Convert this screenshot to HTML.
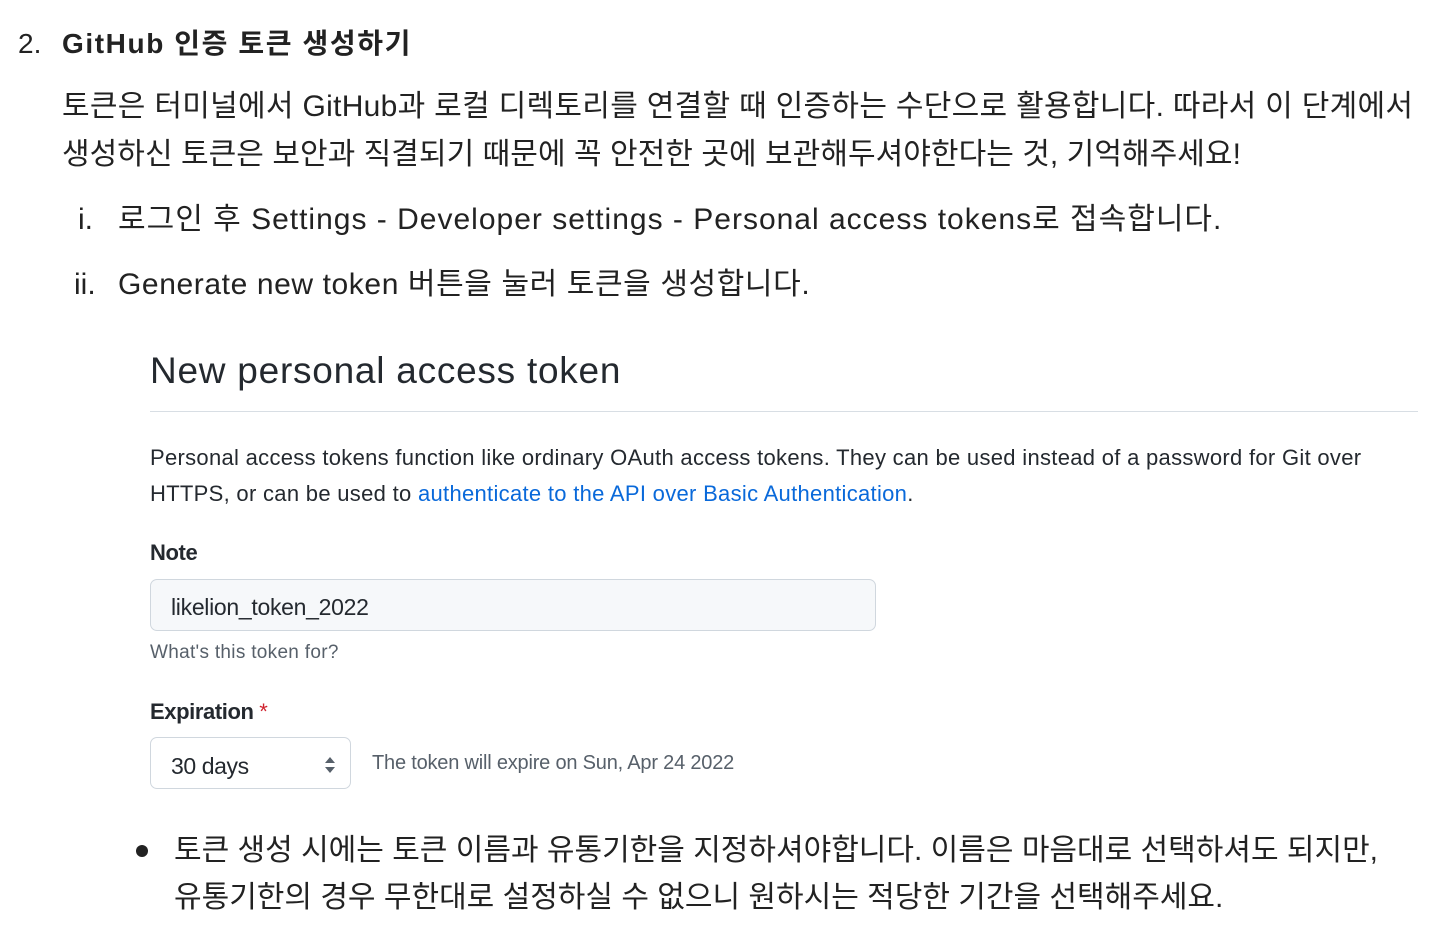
<!DOCTYPE html>
<html><head><meta charset="utf-8"><style>
body{margin:0;width:1436px;height:932px;background:#fff;position:relative;overflow:hidden;font-family:"Liberation Sans","Noto Sans CJK KR",sans-serif;color:#1f1f1f}
.a{position:absolute;white-space:nowrap;line-height:40px}
.k{font-size:30px;color:#222}
.g{font-family:"Liberation Sans","Noto Sans CJK KR",sans-serif;color:#24292f}
</style></head><body>
<div class="a k" style="left:18px;top:24px;font-size:28px">2.</div>
<div class="a k" style="left:62px;top:24px;font-size:28px;font-weight:bold;letter-spacing:1.6px">GitHub 인증 토큰 생성하기</div>
<div class="a k" style="left:62px;top:87px;letter-spacing:0.3px">토큰은 터미널에서 GitHub과 로컬 디렉토리를 연결할 때 인증하는 수단으로 활용합니다. 따라서 이 단계에서</div>
<div class="a k" style="left:62px;top:135px;letter-spacing:0.05px">생성하신 토큰은 보안과 직결되기 때문에 꼭 안전한 곳에 보관해두셔야한다는 것, 기억해주세요!</div>
<div class="a k" style="left:78px;top:200px">i.</div>
<div class="a k" style="left:118px;top:200px;letter-spacing:1.0px">로그인 후 Settings - Developer settings - Personal access tokens로 접속합니다.</div>
<div class="a k" style="left:74px;top:265px">ii.</div>
<div class="a k" style="left:118px;top:265px;letter-spacing:0.6px">Generate new token 버튼을 눌러 토큰을 생성합니다.</div>
<div class="a g" style="left:150px;top:348px;font-size:37px;line-height:46px;letter-spacing:0.75px">New personal access token</div>
<div style="position:absolute;left:150px;top:411px;width:1268px;height:1px;background:#d8dee4"></div>
<div class="a g" style="left:150px;top:444px;font-size:22px;line-height:28px;letter-spacing:0.3px">Personal access tokens function like ordinary OAuth access tokens. They can be used instead of a password for Git over</div>
<div class="a g" style="left:150px;top:480px;font-size:22px;line-height:28px;letter-spacing:0.3px">HTTPS, or can be used to <span style="color:#0969da">authenticate to the API over Basic Authentication</span>.</div>
<div class="a g" style="left:150px;top:539px;font-size:22px;line-height:28px;font-weight:bold;letter-spacing:-0.4px">Note</div>
<div style="position:absolute;left:150px;top:579px;width:724px;height:50px;border:1px solid #d0d7de;border-radius:7px;background:#f6f8fa"></div>
<div class="a g" style="left:171px;top:593px;font-size:23px;line-height:28px;letter-spacing:-0.3px">likelion_token_2022</div>
<div class="a g" style="left:150px;top:641px;font-size:19px;line-height:24px;color:#57606a;letter-spacing:0.3px">What's this token for?</div>
<div class="a g" style="left:150px;top:698px;font-size:22px;line-height:28px;font-weight:bold;letter-spacing:-0.4px">Expiration <span style="color:#cf222e;font-weight:normal">*</span></div>
<div style="position:absolute;left:150px;top:737px;width:199px;height:50px;border:1px solid #d0d7de;border-radius:7px;background:#fff"></div>
<div class="a g" style="left:171px;top:752px;font-size:23px;line-height:28px;letter-spacing:-0.4px">30 days</div>
<svg style="position:absolute;left:323px;top:755px" width="14" height="20" viewBox="0 0 14 20"><path d="M7 2L12 8H2Z M7 18L12 12H2Z" fill="#57606a"/></svg>
<div class="a g" style="left:372px;top:749px;font-size:20px;line-height:28px;color:#57606a;letter-spacing:-0.2px">The token will expire on Sun, Apr 24 2022</div>
<div style="position:absolute;left:136px;top:845px;width:12px;height:12px;border-radius:50%;background:#222"></div>
<div class="a k" style="left:174px;top:831px">토큰 생성 시에는 토큰 이름과 유통기한을 지정하셔야합니다. 이름은 마음대로 선택하셔도 되지만,</div>
<div class="a k" style="left:174px;top:878px">유통기한의 경우 무한대로 설정하실 수 없으니 원하시는 적당한 기간을 선택해주세요.</div>
</body></html>
